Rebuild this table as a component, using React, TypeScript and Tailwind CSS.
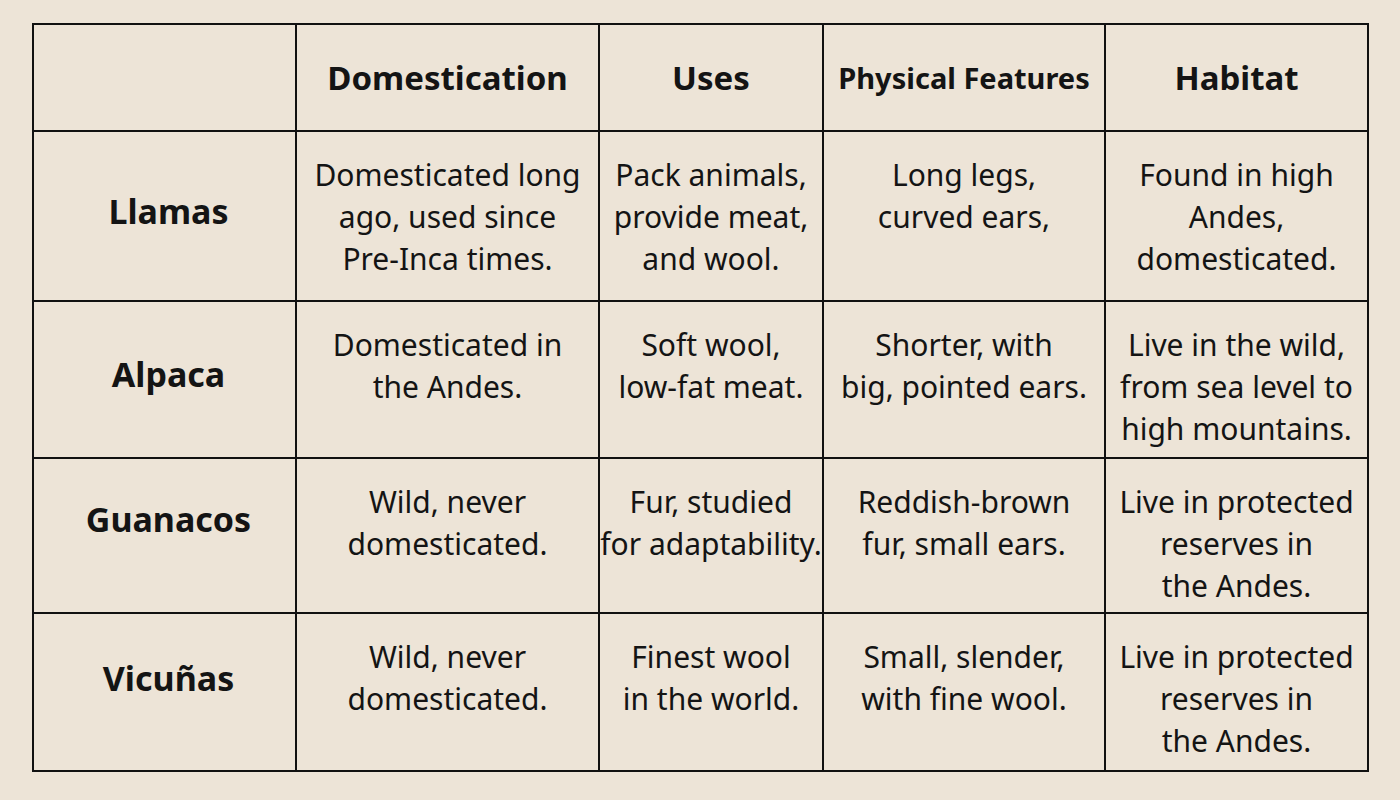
const font = { fontFamily: '"Noto Sans", "Open Sans", sans-serif' };

interface Row {
  name: string;
  labelPad: string;
  height: string;
  cells: string[][];
}

const headers = ["Domestication", "Uses", "Physical Features", "Habitat"];

const rows: Row[] = [
  {
    name: "Llamas",
    labelPad: "pt-[58px]",
    height: "h-[168px]",
    cells: [
      ["Domesticated long", "ago, used since", "Pre-Inca times."],
      ["Pack animals,", "provide meat,", "and wool."],
      ["Long legs,", "curved ears,"],
      ["Found in high", "Andes,", "domesticated."],
    ],
  },
  {
    name: "Alpaca",
    labelPad: "pt-[51px]",
    height: "h-[155px]",
    cells: [
      ["Domesticated in", "the Andes."],
      ["Soft wool,", "low-fat meat."],
      ["Shorter, with", "big, pointed ears."],
      ["Live in the wild,", "from sea level to", "high mountains."],
    ],
  },
  {
    name: "Guanacos",
    labelPad: "pt-[39px]",
    height: "h-[153px]",
    cells: [
      ["Wild, never", "domesticated."],
      ["Fur, studied", "for adaptability."],
      ["Reddish-brown", "fur, small ears."],
      ["Live in protected", "reserves in", "the Andes."],
    ],
  },
  {
    name: "Vicuñas",
    labelPad: "pt-[43px]",
    height: "h-[156px]",
    cells: [
      ["Wild, never", "domesticated."],
      ["Finest wool", "in the world."],
      ["Small, slender,", "with fine wool."],
      ["Live in protected", "reserves in", "the Andes."],
    ],
  },
];

export default function App() {
  return (
    <div className="w-[1400px] h-[800px] bg-[#ede4d7] pt-[23px] pl-[32px] text-[#141414]" style={font}>
      <div className="grid grid-cols-[261px_301px_222px_280px_261px] gap-[2px] bg-[#111] border-2 border-[#111] w-fit">
        <div className="bg-[#ede4d7] h-[105px]" />
        {headers.map((h) => (
          <div
            key={h}
            className={`bg-[#ede4d7] h-[105px] flex items-center justify-center font-bold whitespace-nowrap ${
              h === "Physical Features" ? "text-[29px]" : "text-[33px]"
            }`}
          >
            {h}
          </div>
        ))}
        {rows.map((r) => (
          <div key={r.name} className="contents">
            <div className={`bg-[#ede4d7] ${r.height} ${r.labelPad} pl-[8px] text-center font-bold text-[34px] leading-[42px]`}>
              {r.name}
            </div>
            {r.cells.map((lines, i) => (
              <div
                key={i}
                className={`bg-[#ede4d7] ${r.height} pt-[22px] text-center text-[30px] leading-[42px] whitespace-nowrap overflow-visible`}
              >
                {lines.map((l) => (
                  <div key={l}>{l}</div>
                ))}
              </div>
            ))}
          </div>
        ))}
      </div>
    </div>
  );
}
